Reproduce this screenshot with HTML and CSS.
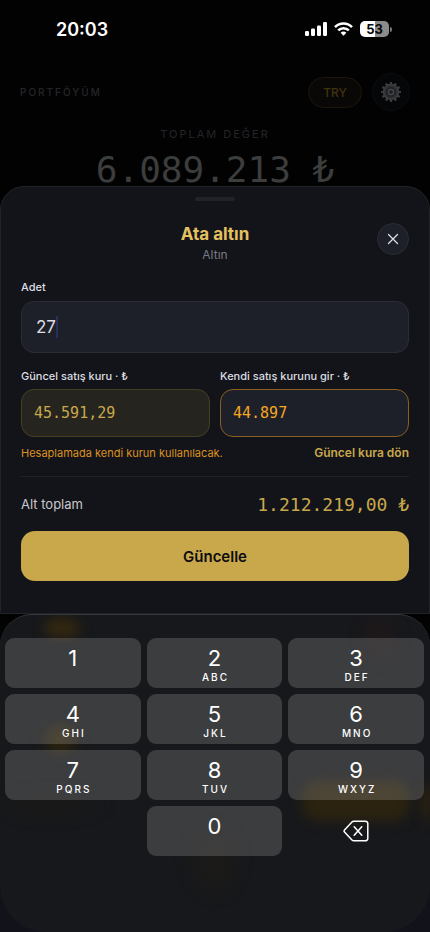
FILE: index.html
```html
<!DOCTYPE html>
<html lang="tr">
<head>
<meta charset="utf-8">
<meta name="viewport" content="width=device-width, initial-scale=1">
<title>Portföyüm</title>
<link rel="stylesheet" href="styles.css">
</head>
<body>
<div class="screen">
  <div class="status">
    <time class="clock">20:03</time>
    <div class="indicators">
      <svg width="22" height="14" viewBox="0 0 22 14" fill="#fff" aria-hidden="true"><rect x="0" y="9" width="4" height="5" rx="1.2"/><rect x="6" y="6.5" width="4" height="7.5" rx="1.2"/><rect x="12" y="3.5" width="4" height="10.5" rx="1.2"/><rect x="18" y="0" width="4" height="14" rx="1.2"/></svg>
      <svg width="19" height="14" viewBox="0 0 19 14" fill="none" stroke="#fff" stroke-width="2.5" aria-hidden="true"><path d="M1 5.1C5.8.2 13.2.2 18 5.1"/><path d="M4.2 8.4c3-3 7.6-3 10.6 0"/><path d="M6.6 10.8c1.7-1.6 4.1-1.6 5.8 0L9.5 13.8z" fill="#fff" stroke="none"/></svg>
      <div class="battery"><span class="cell">53</span><span class="tip"></span></div>
    </div>
  </div>

  <header class="topbar">
    <h1 class="brand">PORTFÖYÜM</h1>
    <button class="currency" type="button">TRY</button>
    <button class="settings" type="button" aria-label="Ayarlar">
      <svg width="22" height="22" viewBox="-11 -11 22 22" aria-hidden="true">
        <g stroke="#3b3d40" stroke-width="2.2"><path d="M0-10V10M-5-8.66L5 8.66M-8.66-5L8.66 5M-10 0H10M-8.66 5L8.66-5M-5 8.66L5-8.66"/></g>
        <circle r="7.4" fill="#2c2e31" stroke="#3b3d40" stroke-width="1.6"/>
        <circle r="5" fill="#222427"/>
        <circle r="2.5" fill="#1a1c1e" stroke="#45474a" stroke-width="1.3"/>
      </svg>
    </button>
  </header>
  <section class="summary">
    <p class="caption">TOPLAM DEĞER</p>
    <p class="total">6.089.213 ₺</p>
  </section>

  <form class="sheet">
    <span class="handle"></span>
    <div class="heading">
      <div class="titles">
        <h2 class="title">Ata altın</h2>
        <p class="subtitle">Altın</p>
      </div>
      <button class="close" type="button" aria-label="Kapat">
        <svg width="12" height="12" viewBox="0 0 12 12" stroke="#dcdde0" stroke-width="1.3" stroke-linecap="round" aria-hidden="true"><path d="M1.5 1.5l9 9M10.5 1.5l-9 9"/></svg>
      </button>
    </div>

    <label class="label" for="amount">Adet</label>
    <div class="amount"><input id="amount" value="27" inputmode="numeric"><span class="caret"></span></div>

    <div class="rates">
      <div class="rate">
        <label class="label" for="current">Güncel satış kuru · ₺</label>
        <input class="field current" id="current" value="45.591,29" readonly>
      </div>
      <div class="rate">
        <label class="label" for="own">Kendi satış kurunu gir · ₺</label>
        <input class="field own" id="own" value="44.897">
      </div>
    </div>
    <div class="note">
      <p class="hint">Hesaplamada kendi kurun kullanılacak.</p>
      <button class="reset" type="button">Güncel kura dön</button>
    </div>

    <div class="subtotal"><span class="subtotal-label">Alt toplam</span><output class="sum">1.212.219,00 ₺</output></div>
    <button class="submit" type="button">Güncelle</button>
  </form>

  <div class="keyboard">
    <div class="keys">
      <button class="key" type="button">1</button>
      <button class="key" type="button">2<small>ABC</small></button>
      <button class="key" type="button">3<small>DEF</small></button>
      <button class="key" type="button">4<small>GHI</small></button>
      <button class="key" type="button">5<small>JKL</small></button>
      <button class="key" type="button">6<small>MNO</small></button>
      <button class="key" type="button">7<small>PQRS</small></button>
      <button class="key" type="button">8<small>TUV</small></button>
      <button class="key" type="button">9<small>WXYZ</small></button>
      <button class="key zero" type="button">0</button>
      <button class="erase" type="button" aria-label="Sil">
        <svg width="26" height="22" viewBox="0 0 26 22" fill="none" stroke="#fff" stroke-width="1.5" stroke-linecap="round" stroke-linejoin="round" aria-hidden="true"><path d="M10.8 1.2H22.4a2.4 2.4 0 0 1 2.4 2.4v14.8a2.4 2.4 0 0 1-2.4 2.4H10.8a2.6 2.6 0 0 1-1.8-.8L1.7 12.3a1.9 1.9 0 0 1 0-2.6L9 2a2.6 2.6 0 0 1 1.8-.8z"/><path d="M11.2 6.8l7.6 8.4M18.8 6.8l-7.6 8.4"/></svg>
      </button>
    </div>
  </div>
</div>
</body>
</html>
```

FILE: styles.css
```css
* { box-sizing: border-box; margin: 0; }

body {
  background: #020202;
  color: #dcdde0;
  font-family: "Inter", sans-serif;
}

button, input { font: inherit; color: inherit; border: 0; padding: 0; background: none; outline: 0; }

.screen {
  min-height: 100vh;
  display: flex;
  flex-direction: column;
  background: linear-gradient(#020202 66%, #07080b 72%, #12131a 90%);
}

/* Status bar */
.status {
  display: flex;
  justify-content: space-between;
  align-items: center;
  height: 58px;
  padding: 0 38px 0 56px;
  color: #fff;
}
.clock { font-size: 18px; font-weight: 600; }
.indicators { display: flex; align-items: center; gap: 7px; }
.battery { display: flex; align-items: center; gap: 1px; }
.cell {
  width: 29px;
  border-radius: 5px;
  background: linear-gradient(90deg, #fff 53%, #8b8b8b 53%);
  color: #050505;
  font-size: 13px;
  line-height: 16px;
  font-weight: 700;
  text-align: center;
}
.tip { width: 2px; height: 5px; border-radius: 0 2px 2px 0; background: #777; }

/* Portfolio header */
.topbar { display: flex; align-items: center; gap: 10px; padding: 15px 20px 0; }
.brand { flex: 1; color: #252629; font-size: 10px; font-weight: 500; letter-spacing: 2px; }
.currency {
  width: 54px;
  height: 31px;
  border: 1px solid #1c170b;
  border-radius: 16px;
  background: #0a0806;
  color: #41330f;
  font-size: 12px;
  font-weight: 500;
}
.settings {
  display: grid;
  place-items: center;
  width: 38px;
  height: 38px;
  border: 1px solid #0c0d10;
  border-radius: 50%;
  background: #050608;
}
.summary { height: 75px; padding-top: 16px; text-align: center; }
.caption { color: #242528; font-size: 11px; line-height: 14px; letter-spacing: 2px; }
.total { padding-top: 8px; color: #3c3d3d; font-family: "DejaVu Sans Mono", monospace; font-size: 36px; line-height: 42px; }

/* Bottom sheet */
.sheet {
  display: flex;
  flex-direction: column;
  position: relative;
  padding: 10px 20px 32px;
  border: 1px solid #222328;
  border-radius: 24px 24px 0 0;
  background: #13141a;
}
.handle { align-self: center; width: 40px; height: 4px; border-radius: 2px; background: #222327; }
.heading {
  display: grid;
  grid-template-columns: 32px 1fr 32px;
  align-items: start;
  margin-top: 22px;
  padding-bottom: 14px;
}
.titles { grid-column: 2; text-align: center; }
.title { color: #e5c060; font-size: 17px; line-height: 22px; font-weight: 700; }
.subtitle { color: #777983; font-size: 12px; line-height: 20px; }
.close {
  display: grid;
  place-items: center;
  width: 32px;
  height: 32px;
  border: 1px solid #2b2d34;
  border-radius: 50%;
  background: #1d2029;
}
.label { display: block; color: #dcdde0; font-size: 11px; line-height: 16px; font-weight: 500; }

.amount {
  display: flex;
  align-items: center;
  height: 52px;
  margin: 6px 0 15px;
  padding: 0 14px;
  border: 1px solid #2b2d34;
  border-radius: 13px;
  background: #1d2029;
}
.amount input { field-sizing: content; font-size: 17px; line-height: 24px; }
.caret { width: 2px; height: 22px; background: #24315e; }

.rates { display: grid; grid-template-columns: 1fr 1fr; gap: 10px; }
.field {
  width: 100%;
  height: 48px;
  margin-top: 5px;
  padding: 0 12px;
  border: 1px solid;
  border-radius: 13px;
  font-family: "DejaVu Sans Mono", monospace;
  font-size: 15px;
}
.current { border-color: #47401f; background: #26241f; color: #c8a84b; }
.own { border-color: #8b5f20; background: #1d2029; color: #f5a623; }

.note {
  display: flex;
  justify-content: space-between;
  align-items: center;
  padding: 8px 0 15px;
  border-bottom: 1px solid #202126;
  line-height: 16px;
}
.hint { color: #dc901f; font-size: 11px; white-space: nowrap; }
.reset { color: #c8a84b; font-size: 12px; font-weight: 600; white-space: nowrap; }

.subtotal { display: flex; justify-content: space-between; align-items: center; height: 54px; }
.subtotal-label { color: #c8c9cc; font-size: 13px; }
.sum { color: #c8a84b; font-family: "DejaVu Sans Mono", monospace; font-size: 18px; }
.submit {
  height: 50px;
  border-radius: 14px;
  background: #c8a84b;
  color: #0c0c0e;
  font-size: 15px;
  font-weight: 600;
}

/* Numeric keypad */
.keyboard {
  position: relative;
  isolation: isolate;
  overflow: hidden;
  flex: 1;
  padding: 23px 6px 75px 5px;
  border-top: 1px solid #36373c;
  border-radius: 32px 32px 46px 46px;
  background: #17181b;
}
/* Blurred colours of the list showing through the keypad */
.keyboard::before,
.keyboard::after {
  content: "";
  position: absolute;
  z-index: -1;
  filter: blur(6px);
}
.keyboard::before {
  inset: 0;
  background:
    radial-gradient(ellipse 20px 11px at 62px 13px, #33270f 80%, transparent),
    radial-gradient(ellipse 20px 18px at 60px 124px, #2d240f 50%, transparent),
    radial-gradient(ellipse 20px 30px at 380px 20px, #1d181a 50%, transparent),
    radial-gradient(ellipse 9px 24px at 100% 187px, #33260b 70%, transparent),
    radial-gradient(ellipse 60px 16px at 50px 190px, #1a1918, transparent),
    radial-gradient(ellipse 30px 40px at 214px 246px, #1d1b17, transparent);
}
.keyboard::after {
  top: 166px;
  right: 20px;
  width: 108px;
  height: 40px;
  border-radius: 16px;
  background: #2b2310;
}
.keys { display: grid; grid-template-columns: repeat(3, 1fr); gap: 6px; }
.key {
  display: flex;
  flex-direction: column;
  align-items: center;
  height: 50px;
  padding-top: 7px;
  border-radius: 9px;
  background: rgba(255, 255, 255, .16);
  color: #fff;
  font-size: 22px;
  line-height: 26px;
}
.key small { padding-left: 2px; font-size: 10px; line-height: 13px; font-weight: 500; letter-spacing: 2px; }
.zero { grid-column: 2; }
.erase { display: grid; place-items: center; }
```
